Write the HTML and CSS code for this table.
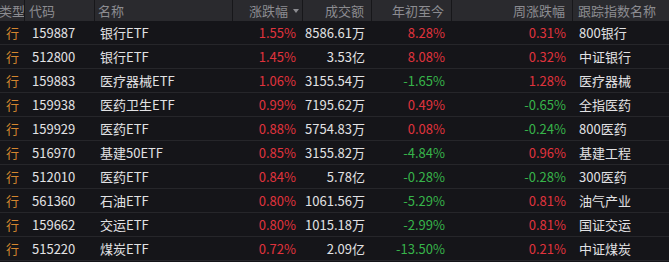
FILE: index.html
```html
<!DOCTYPE html>
<html lang="zh">
<head>
<meta charset="utf-8">
<link rel="stylesheet" href="styles.css">
</head>
<body>
<div class="grid">
  <div class="row head">
    <div class="c type">类型</div>
    <div class="c code">代码</div>
    <div class="c name">名称</div>
    <div class="c num sort">涨跌幅<span class="tri"></span></div>
    <div class="c num">成交额</div>
    <div class="c num">年初至今</div>
    <div class="c num">周涨跌幅</div>
    <div class="c idx">跟踪指数名称</div>
  </div>
  <div class="row"><div class="c type">行</div><div class="c code">159887</div><div class="c name">银行ETF</div><div class="c num up">1.55%</div><div class="c num">8586.61万</div><div class="c num up">8.28%</div><div class="c num up">0.31%</div><div class="c idx">800银行</div></div>
  <div class="row"><div class="c type">行</div><div class="c code">512800</div><div class="c name">银行ETF</div><div class="c num up">1.45%</div><div class="c num">3.53亿</div><div class="c num up">8.08%</div><div class="c num up">0.32%</div><div class="c idx">中证银行</div></div>
  <div class="row"><div class="c type">行</div><div class="c code">159883</div><div class="c name">医疗器械ETF</div><div class="c num up">1.06%</div><div class="c num">3155.54万</div><div class="c num down">-1.65%</div><div class="c num up">1.28%</div><div class="c idx">医疗器械</div></div>
  <div class="row"><div class="c type">行</div><div class="c code">159938</div><div class="c name">医药卫生ETF</div><div class="c num up">0.99%</div><div class="c num">7195.62万</div><div class="c num up">0.49%</div><div class="c num down">-0.65%</div><div class="c idx">全指医药</div></div>
  <div class="row"><div class="c type">行</div><div class="c code">159929</div><div class="c name">医药ETF</div><div class="c num up">0.88%</div><div class="c num">5754.83万</div><div class="c num up">0.08%</div><div class="c num down">-0.24%</div><div class="c idx">800医药</div></div>
  <div class="row"><div class="c type">行</div><div class="c code">516970</div><div class="c name">基建50ETF</div><div class="c num up">0.85%</div><div class="c num">3155.82万</div><div class="c num down">-4.84%</div><div class="c num up">0.96%</div><div class="c idx">基建工程</div></div>
  <div class="row"><div class="c type">行</div><div class="c code">512010</div><div class="c name">医药ETF</div><div class="c num up">0.84%</div><div class="c num">5.78亿</div><div class="c num down">-0.28%</div><div class="c num down">-0.28%</div><div class="c idx">300医药</div></div>
  <div class="row"><div class="c type">行</div><div class="c code">561360</div><div class="c name">石油ETF</div><div class="c num up">0.80%</div><div class="c num">1061.56万</div><div class="c num down">-5.29%</div><div class="c num up">0.81%</div><div class="c idx">油气产业</div></div>
  <div class="row"><div class="c type">行</div><div class="c code">159662</div><div class="c name">交运ETF</div><div class="c num up">0.80%</div><div class="c num">1015.18万</div><div class="c num down">-2.99%</div><div class="c num up">0.81%</div><div class="c idx">国证交运</div></div>
  <div class="row"><div class="c type">行</div><div class="c code">515220</div><div class="c name">煤炭ETF</div><div class="c num up">0.72%</div><div class="c num">2.09亿</div><div class="c num down">-13.50%</div><div class="c num up">0.21%</div><div class="c idx">中证煤炭</div></div>
</div>
</body>
</html>
```
FILE: styles.css
```css
html, body {
  margin: 0;
  padding: 0;
  background: #151519;
}
body {
  width: 669px;
  height: 262px;
  overflow: hidden;
  font-family: "Noto Sans CJK SC", "Noto Sans", sans-serif;
  font-size: 13px;
  color: #e2e2e4;
}
.grid {
  display: flex;
  flex-direction: column;
}
.row {
  display: grid;
  grid-template-columns: 25px 70px 138px 70px 69px 80px 121px 96px;
  height: 24px;
  align-items: center;
  border-bottom: 1px solid #26262a;
  box-sizing: border-box;
}
.row.head {
  height: 21px;
  background: #2a2a2e;
  color: #8c8c91;
  border-bottom: none;
  align-items: stretch;
}
.head .c {
  display: flex;
  align-items: center;
  border-right: 1px solid #17171a;
}
.head .c:last-child { border-right: none; }
.head .num { justify-content: flex-end; }
.c {
  white-space: nowrap;
  overflow: hidden;
  line-height: 24px;
  box-sizing: border-box;
}
.head .c { line-height: 21px; }
.type { text-align: center; color: #d4862f; }
.head .type { color: #8c8c91; justify-content: center; padding-left: 0; }
.code { padding-left: 7px; }
.head .code { padding-left: 4px; }
.name { padding-left: 5px; }
.head .name { padding-left: 3px; }
.num { text-align: right; padding-right: 7px; }
.head .num { padding-right: 7px; }
.head .sort { padding-right: 3px; }
.tri {
  width: 0;
  height: 0;
  border-left: 3.5px solid transparent;
  border-right: 3.5px solid transparent;
  border-top: 4px solid #8c8c91;
  margin-left: 5px;
}
.idx { padding-left: 6px; }
.head .idx { padding-left: 5px; }
.up { color: #e0333d; }
.down { color: #37b44a; }
```
